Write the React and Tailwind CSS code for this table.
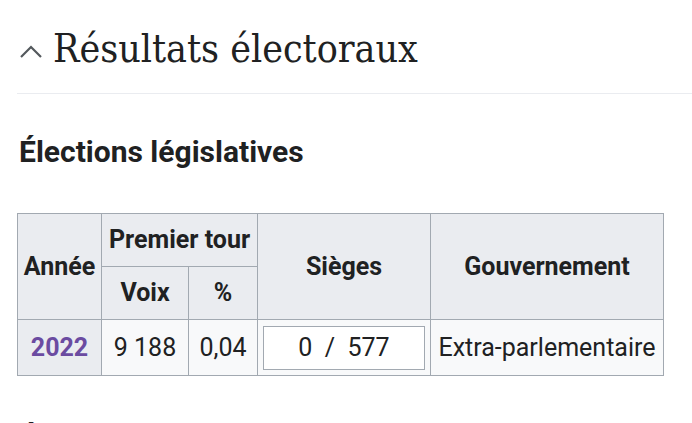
export default function App() {
  return (
    <div className="w-[692px] h-[423px] overflow-hidden bg-white text-[#202122] font-['Roboto',sans-serif]">
      <div className="pl-[17px]">
        {/* section heading */}
        <div className="flex items-center h-[94px] pt-[4px] border-b border-[#eaecf0]">
          <svg width="24" height="14" viewBox="0 0 24 14" className="ml-[2px] mr-[10px] mt-[6px]">
            <polyline points="2,12 12,2 22,12" fill="none" stroke="#54595d" strokeWidth="2.2" />
          </svg>
          <h2 className="font-['DejaVu_Serif',serif] font-stretch-condensed text-[39px] leading-none">Résultats électoraux</h2>
        </div>

        <h3 className="mt-[40px] ml-[2px] text-[30px] leading-[36px] font-bold">Élections législatives</h3>

        <table className="mt-[43px] border-collapse text-[25px] border border-[#a2a9b1]">
          <thead>
            <tr className="h-[53px]">
              <th rowSpan={2} className="w-[84px] bg-[#eaecf0] border border-[#a2a9b1] font-bold">Année</th>
              <th colSpan={2} className="bg-[#eaecf0] border border-[#a2a9b1] font-bold">Premier tour</th>
              <th rowSpan={2} className="w-[173px] bg-[#eaecf0] border border-[#a2a9b1] font-bold">Sièges</th>
              <th rowSpan={2} className="w-[233px] bg-[#eaecf0] border border-[#a2a9b1] font-bold">Gouvernement</th>
            </tr>
            <tr className="h-[53px]">
              <th className="w-[87px] bg-[#eaecf0] border border-[#a2a9b1] font-bold">Voix</th>
              <th className="w-[69px] bg-[#eaecf0] border border-[#a2a9b1] font-bold">%</th>
            </tr>
          </thead>
          <tbody>
            <tr className="h-[56px]">
              <th className="bg-[#eaecf0] border border-[#a2a9b1] font-bold text-[#6b4ba1]">2022</th>
              <td className="bg-[#f8f9fa] border border-[#a2a9b1] text-center">9 188</td>
              <td className="bg-[#f8f9fa] border border-[#a2a9b1] text-center">0,04</td>
              <td className="bg-[#f8f9fa] border border-[#a2a9b1] px-[5px]">
                <div className="h-[44px] bg-white border border-[#a2a9b1] flex items-center justify-center whitespace-pre">
                  0  /  577
                </div>
              </td>
              <td className="bg-[#f8f9fa] border border-[#a2a9b1] text-center">Extra-parlementaire</td>
            </tr>
          </tbody>
        </table>

        <h3 className="mt-[45px] ml-[2px] text-[30px] leading-[36px] font-bold">Élections européennes</h3>
      </div>
    </div>
  );
}
